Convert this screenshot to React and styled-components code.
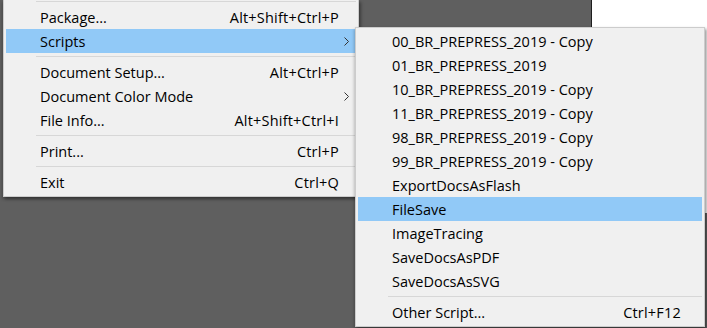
import React from "react";
import styled, { createGlobalStyle } from "styled-components";

const Global = createGlobalStyle`
  html, body { margin: 0; padding: 0; }
  body {
    background: #5f5f5f;
    font-family: "Open Sans", "Noto Sans", "Liberation Sans", sans-serif;
    overflow: hidden;
  }
`;

const Stage = styled.div`
  position: relative;
  width: 707px;
  height: 328px;
  display: flex;
  justify-content: flex-end;
  align-items: flex-start;
  background: #5f5f5f;
  overflow: hidden;
`;

const WhitePanel = styled.div`
  width: 115px;
  height: 213px;
  background: #ffffff;
  border-left: 1px solid #1e1e1e;
`;

const Menu = styled.div`
  position: absolute;
  left: ${(p) => p.$left}px;
  top: ${(p) => p.$top}px;
  width: ${(p) => p.$width}px;
  box-sizing: border-box;
  background: #f0f0f0;
  border: 1px solid #cccccc;
  border-top: ${(p) => (p.$cut ? "none" : "1px solid #cccccc")};
  padding: ${(p) => (p.$cut ? "0 2px 2px" : "1px 2px 2px")};
  box-shadow: 2px 2px 3px rgba(0, 0, 0, 0.35), -1px 2px 3px rgba(0, 0, 0, 0.2);
  display: flex;
  flex-direction: column;
  z-index: ${(p) => p.$z};
`;

const Item = styled.div`
  height: 24px;
  display: grid;
  grid-template-columns: 1fr auto ${(p) => p.$tail}px;
  align-items: center;
  padding-left: 34px;
  background: ${(p) => (p.$active ? "#91c9f7" : "transparent")};
  color: #000;
  font-size: 14.5px;
  line-height: 24px;
  white-space: nowrap;
`;

const Label = styled.span`
  padding-top: 1px;
`;

const Shortcut = styled.span`
  text-align: right;
  padding-top: 1px;
  letter-spacing: 0.2px;
`;

const Arrow = styled.span`
  display: flex;
  align-items: center;
  padding-left: 5px;
`;

const Separator = styled.div`
  height: 1px;
  background: #d7d7d7;
  margin: ${(p) => p.$top ?? 3}px 0 3px 30px;
`;

const Chevron = () => (
  <svg width="5" height="9" viewBox="0 0 5 9">
    <polyline points="0.5,0.5 4.5,4.5 0.5,8.5" fill="none" stroke="#333" strokeWidth="1" />
  </svg>
);

const Row = ({ label, shortcut, sub, active, tail }) => (
  <Item $active={active} $tail={tail}>
    <Label>{label}</Label>
    <Shortcut>{shortcut}</Shortcut>
    <Arrow>{sub ? <Chevron /> : null}</Arrow>
  </Item>
);

const scripts = [
  "00_BR_PREPRESS_2019 - Copy",
  "01_BR_PREPRESS_2019",
  "10_BR_PREPRESS_2019 - Copy",
  "11_BR_PREPRESS_2019 - Copy",
  "98_BR_PREPRESS_2019 - Copy",
  "99_BR_PREPRESS_2019 - Copy",
  "ExportDocsAsFlash",
  "FileSave",
  "ImageTracing",
  "SaveDocsAsPDF",
  "SaveDocsAsSVG",
];

export default function App() {
  return (
    <>
      <Global />
      <Stage>
        <WhitePanel />
        <Menu $left={3} $top={0} $width={356} $cut $z={1}>
          <Separator $top={1} />
          <Row tail={17} label="Package..." shortcut="Alt+Shift+Ctrl+P" />
          <Row tail={17} label="Scripts" sub active />
          <Separator />
          <Row tail={17} label="Document Setup..." shortcut="Alt+Ctrl+P" />
          <Row tail={17} label="Document Color Mode" sub />
          <Row tail={17} label="File Info..." shortcut="Alt+Shift+Ctrl+I" />
          <Separator />
          <Row tail={17} label="Print..." shortcut="Ctrl+P" />
          <Separator />
          <Row tail={17} label="Exit" shortcut="Ctrl+Q" />
        </Menu>
        <Menu $left={355} $top={27} $width={350} $z={2}>
          {scripts.map((s) => (
            <Row key={s} tail={21} label={s} active={s === "FileSave"} />
          ))}
          <Separator />
          <Row tail={21} label="Other Script..." shortcut="Ctrl+F12" />
        </Menu>
      </Stage>
    </>
  );
}
